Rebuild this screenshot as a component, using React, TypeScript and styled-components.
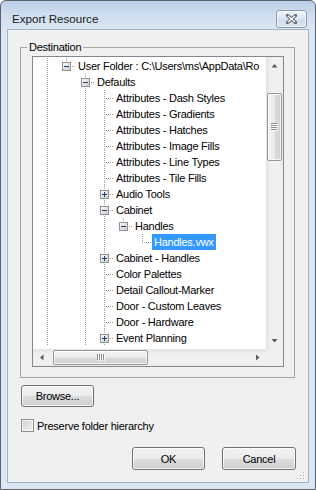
import React from 'react';
import styled, { createGlobalStyle } from 'styled-components';

const GlobalStyle = createGlobalStyle`
  html, body {
    margin: 0;
    padding: 0;
    background: #ffffff;
  }
  body {
    font-family: 'Liberation Sans', Arial, sans-serif;
    font-size: 11px;
    letter-spacing: -0.25px;
    color: #000;
  }
`;

const Window = styled.div`
  width: 316px;
  height: 490px;
  box-sizing: border-box;
  border: 1px solid #5a626d;
  border-radius: 6px 6px 0 0;
  background: linear-gradient(#bccfe7 0, #cfdef0 14px, #dae6f3 28px, #dae6f3 100%);
  padding: 0 6px 6px;
  display: flex;
  flex-direction: column;
  overflow: hidden;
`;

const TitleBar = styled.div`
  height: 28px;
  box-sizing: border-box;
  display: flex;
  align-items: center;
  justify-content: space-between;
  padding: 9px 2px 1px 5px;
`;

const Title = styled.span`
  font-size: 11.6px;
  letter-spacing: 0;
  color: #1b1b1b;
  line-height: 18px;
`;

const CloseButton = styled.div`
  width: 31px;
  height: 18px;
  box-sizing: border-box;
  border: 1px solid #8a9ab0;
  border-radius: 3px;
  background: linear-gradient(#eef3f9, #dbe5f1 50%, #cfdcec 51%, #dbe5f1);
  box-shadow: inset 0 0 0 1px rgba(255, 255, 255, 0.6);
  display: flex;
  align-items: center;
  justify-content: center;
`;

const Client = styled.div`
  flex: 1;
  border: 1px solid #a3b1c4;
  background: #f0f0f0;
  padding: 11px 12px 12px;
  display: flex;
  flex-direction: column;
  position: relative;
`;

const Group = styled.fieldset`
  margin: 0 1px 0 0;
  padding: 2px 10px 10px 11px;
  border: 1px solid #a5a5a5;
  min-width: 0;
`;

const Legend = styled.legend`
  padding: 0 2px;
  margin-left: -5px;
  line-height: 13px;
`;

const TreeView = styled.div`
  width: 252px;
  height: 311px;
  box-sizing: border-box;
  border: 1px solid #828790;
  background: #fff;
  display: grid;
  grid-template-columns: 1fr 17px;
  grid-template-rows: 1fr 17px;
`;

const TreeContent = styled.div`
  overflow: hidden;
  padding: 1px 0 0 5px;
`;

const Row = styled.div`
  display: flex;
  height: 16px;
  white-space: nowrap;
`;

type LineKind = 'V' | 'T' | 'L' | '';

const dotV = 'repeating-linear-gradient(to bottom, #a0a0a0 0 1px, transparent 1px 2px)';
const dotH = 'repeating-linear-gradient(to right, #a0a0a0 0 1px, transparent 1px 2px)';

const lineBackground = (kind: LineKind) => {
  switch (kind) {
    case 'V':
      return `background: ${dotV} 9px 0 / 1px 16px no-repeat;`;
    case 'T':
      return `background: ${dotV} 9px 0 / 1px 16px no-repeat, ${dotH} 9px 8px / 10px 1px no-repeat;`;
    case 'L':
      return `background: ${dotV} 9px 0 / 1px 9px no-repeat, ${dotH} 9px 8px / 10px 1px no-repeat;`;
    default:
      return 'background: none;';
  }
};

const Indent = styled.div<{ $kind: LineKind }>`
  width: 19px;
  height: 16px;
  flex: none;
  box-sizing: border-box;
  padding: 4px 0 0 5px;
  ${(p) => lineBackground(p.$kind)}
`;

const Label = styled.span<{ $selected?: boolean }>`
  padding: 0 2px;
  line-height: 16px;
  height: 16px;
  background: ${(p) => (p.$selected ? '#3399ff' : 'transparent')};
  color: ${(p) => (p.$selected ? '#fff' : '#000')};
`;

const VScroll = styled.div`
  display: flex;
  flex-direction: column;
  background: linear-gradient(to right, #e2e2e2, #efefef 25%, #f1f1f1 75%, #ebebeb);
`;

const HScroll = styled.div`
  display: flex;
  background: linear-gradient(#e2e2e2, #efefef 25%, #f1f1f1 75%, #ebebeb);
`;

const ArrowButton = styled.div`
  width: 17px;
  height: 17px;
  flex: none;
  display: flex;
  align-items: center;
  justify-content: center;
`;

const TrackV = styled.div<{ $offset: number }>`
  flex: 1;
  padding-top: ${(p) => p.$offset}px;
`;

const TrackH = styled.div<{ $offset: number }>`
  flex: 1;
  display: flex;
  padding-left: ${(p) => p.$offset}px;
`;

const ThumbV = styled.div`
  height: 68px;
  margin: 0 1px;
  box-sizing: border-box;
  border: 1px solid #979797;
  border-radius: 2px;
  background: linear-gradient(to right, #f5f5f5, #e9e9e9 50%, #dadada 51%, #d2d2d2);
  box-shadow: inset 0 0 0 1px rgba(255, 255, 255, 0.75);
  display: flex;
  align-items: center;
  justify-content: center;
`;

const ThumbH = styled.div`
  width: 95px;
  height: 15px;
  margin-top: 1px;
  box-sizing: border-box;
  border: 1px solid #979797;
  border-radius: 2px;
  background: linear-gradient(#f5f5f5, #e9e9e9 50%, #dadada 51%, #d2d2d2);
  box-shadow: inset 0 0 0 1px rgba(255, 255, 255, 0.75);
  display: flex;
  align-items: center;
  justify-content: center;
`;

const Corner = styled.div`
  background: #f0f0f0;
`;

const Button = styled.button<{ $w: number; $h: number }>`
  width: ${(p) => p.$w}px;
  height: ${(p) => p.$h}px;
  flex: none;
  box-sizing: border-box;
  padding: 0;
  border: 1px solid #707070;
  border-radius: 3px;
  background: linear-gradient(#f2f2f2, #ebebeb 50%, #dddddd 51%, #cfcfcf);
  box-shadow: inset 0 0 0 1px rgba(255, 255, 255, 0.8);
  font: inherit;
  letter-spacing: inherit;
  color: #000;
`;

const BrowseRow = styled.div`
  margin-top: 7px;
  padding-left: 1px;
  display: flex;
`;

const CheckRow = styled.label`
  margin-top: 12px;
  padding-left: 1px;
  height: 13px;
  display: flex;
  align-items: center;
  gap: 3px;
`;

const CheckBox = styled.span`
  width: 13px;
  height: 13px;
  box-sizing: border-box;
  border: 1px solid #8e8f8f;
  background: linear-gradient(135deg, #c9ccd1, #e4e6e8 60%, #f4f4f4);
  box-shadow: inset 0 0 0 1px #f4f4f4;
`;

const ButtonRow = styled.div`
  margin-top: 15px;
  display: flex;
  justify-content: flex-end;
  gap: 17px;
`;

const Grip = styled.svg`
  position: absolute;
  right: 2px;
  bottom: 1px;
`;

type TreeItem = {
  lines: LineKind[];
  expander?: 'plus' | 'minus';
  text: string;
  selected?: boolean;
};

const leaf = (text: string, expander?: 'plus' | 'minus'): TreeItem => ({
  lines: ['V', '', 'V', 'T'],
  expander,
  text,
});

const items: TreeItem[] = [
  {
    lines: ['V', 'L'],
    expander: 'minus',
    text: 'User Folder : C:\\Users\\ms\\AppData\\Ro',
  },
  { lines: ['V', '', 'T'], expander: 'minus', text: 'Defaults' },
  leaf('Attributes - Dash Styles'),
  leaf('Attributes - Gradients'),
  leaf('Attributes - Hatches'),
  leaf('Attributes - Image Fills'),
  leaf('Attributes - Line Types'),
  leaf('Attributes - Tile Fills'),
  leaf('Audio Tools', 'plus'),
  leaf('Cabinet', 'minus'),
  { lines: ['V', '', 'V', 'V', 'L'], expander: 'minus', text: 'Handles' },
  { lines: ['V', '', 'V', 'V', '', 'L'], text: 'Handles.vwx', selected: true },
  leaf('Cabinet - Handles', 'plus'),
  leaf('Color Palettes'),
  leaf('Detail Callout-Marker'),
  leaf('Door - Custom Leaves'),
  leaf('Door - Hardware'),
  leaf('Event Planning', 'plus'),
];

const Expander = ({ kind }: { kind: 'plus' | 'minus' }) => (
  <svg width="9" height="9" viewBox="0 0 9 9" style={{ display: 'block' }}>
    <defs>
      <linearGradient id="expfill" x1="0" y1="0" x2="1" y2="1">
        <stop offset="0" stopColor="#ffffff" />
        <stop offset="1" stopColor="#c8c8c8" />
      </linearGradient>
    </defs>
    <rect x="0.5" y="0.5" width="8" height="8" fill="url(#expfill)" stroke="#919191" />
    <path d="M2 4.5h5" stroke="#1e3d74" strokeWidth="1" />
    {kind === 'plus' && <path d="M4.5 2v5" stroke="#1e3d74" strokeWidth="1" />}
  </svg>
);

const Arrow = ({ dir }: { dir: 'up' | 'down' | 'left' | 'right' }) => {
  const paths = {
    up: 'M0.5 4.5L3.5 1L6.5 4.5Z',
    down: 'M0.5 1L3.5 4.5L6.5 1Z',
    left: 'M4.5 0.5L1 3.5L4.5 6.5Z',
    right: 'M1 0.5L4.5 3.5L1 6.5Z',
  };
  const vertical = dir === 'up' || dir === 'down';
  return (
    <svg width={vertical ? 7 : 5} height={vertical ? 5 : 7} viewBox={vertical ? '0 0 7 5' : '0 0 5 7'}>
      <path d={paths[dir]} fill="#5b5b5b" />
    </svg>
  );
};

const GripLines = ({ vertical }: { vertical: boolean }) =>
  vertical ? (
    <svg width="7" height="8" viewBox="0 0 7 8">
      {[0, 2, 4, 6].map((y) => (
        <g key={y}>
          <rect x="0" y={y} width="6" height="1" fill="#8f8f8f" />
          <rect x="1" y={y + 1} width="6" height="1" fill="#ffffff" opacity="0.9" />
        </g>
      ))}
    </svg>
  ) : (
    <svg width="8" height="7" viewBox="0 0 8 7">
      {[0, 2, 4, 6].map((x) => (
        <g key={x}>
          <rect x={x} y="0" width="1" height="6" fill="#8f8f8f" />
          <rect x={x + 1} y="1" width="1" height="6" fill="#ffffff" opacity="0.9" />
        </g>
      ))}
    </svg>
  );

const App = () => {
  return (
    <>
      <GlobalStyle />
      <Window>
        <TitleBar>
          <Title>Export Resource</Title>
          <CloseButton>
            <svg width="11" height="10" viewBox="0 0 11 10">
              <path d="M1.5 1.5L9.5 8.5M9.5 1.5L1.5 8.5" stroke="#5f6368" strokeWidth="3.2" strokeLinecap="square" />
              <path d="M1.8 1.8L9.2 8.2M9.2 1.8L1.8 8.2" stroke="#ffffff" strokeWidth="1.4" />
            </svg>
          </CloseButton>
        </TitleBar>
        <Client>
          <Group>
            <Legend>Destination</Legend>
            <TreeView>
              <TreeContent>
                {items.map((item, i) => (
                  <Row key={i}>
                    {item.lines.map((kind, j) => (
                      <Indent key={j} $kind={kind}>
                        {item.expander && j === item.lines.length - 1 && (
                          <Expander kind={item.expander} />
                        )}
                      </Indent>
                    ))}
                    <Label $selected={item.selected}>{item.text}</Label>
                  </Row>
                ))}
              </TreeContent>
              <VScroll>
                <ArrowButton>
                  <Arrow dir="up" />
                </ArrowButton>
                <TrackV $offset={19}>
                  <ThumbV>
                    <GripLines vertical />
                  </ThumbV>
                </TrackV>
                <ArrowButton>
                  <Arrow dir="down" />
                </ArrowButton>
              </VScroll>
              <HScroll>
                <ArrowButton>
                  <Arrow dir="left" />
                </ArrowButton>
                <TrackH $offset={3}>
                  <ThumbH>
                    <GripLines vertical={false} />
                  </ThumbH>
                </TrackH>
                <ArrowButton>
                  <Arrow dir="right" />
                </ArrowButton>
              </HScroll>
              <Corner />
            </TreeView>
          </Group>
          <BrowseRow>
            <Button $w={73} $h={22}>Browse...</Button>
          </BrowseRow>
          <CheckRow>
            <CheckBox />
            <span>Preserve folder hierarchy</span>
          </CheckRow>
          <ButtonRow>
            <Button $w={73} $h={23}>OK</Button>
            <Button $w={74} $h={23}>Cancel</Button>
          </ButtonRow>
          <Grip width="10" height="10" viewBox="0 0 10 10">
            {[
              [8, 2],
              [5, 5],
              [8, 5],
              [2, 8],
              [5, 8],
              [8, 8],
            ].map(([x, y], k) => (
              <g key={k}>
                <rect x={x - 1} y={y - 1} width="1" height="1" fill="#a8a8a8" />
                <rect x={x} y={y} width="1" height="1" fill="#ffffff" />
              </g>
            ))}
          </Grip>
        </Client>
      </Window>
    </>
  );
};

export default App;
